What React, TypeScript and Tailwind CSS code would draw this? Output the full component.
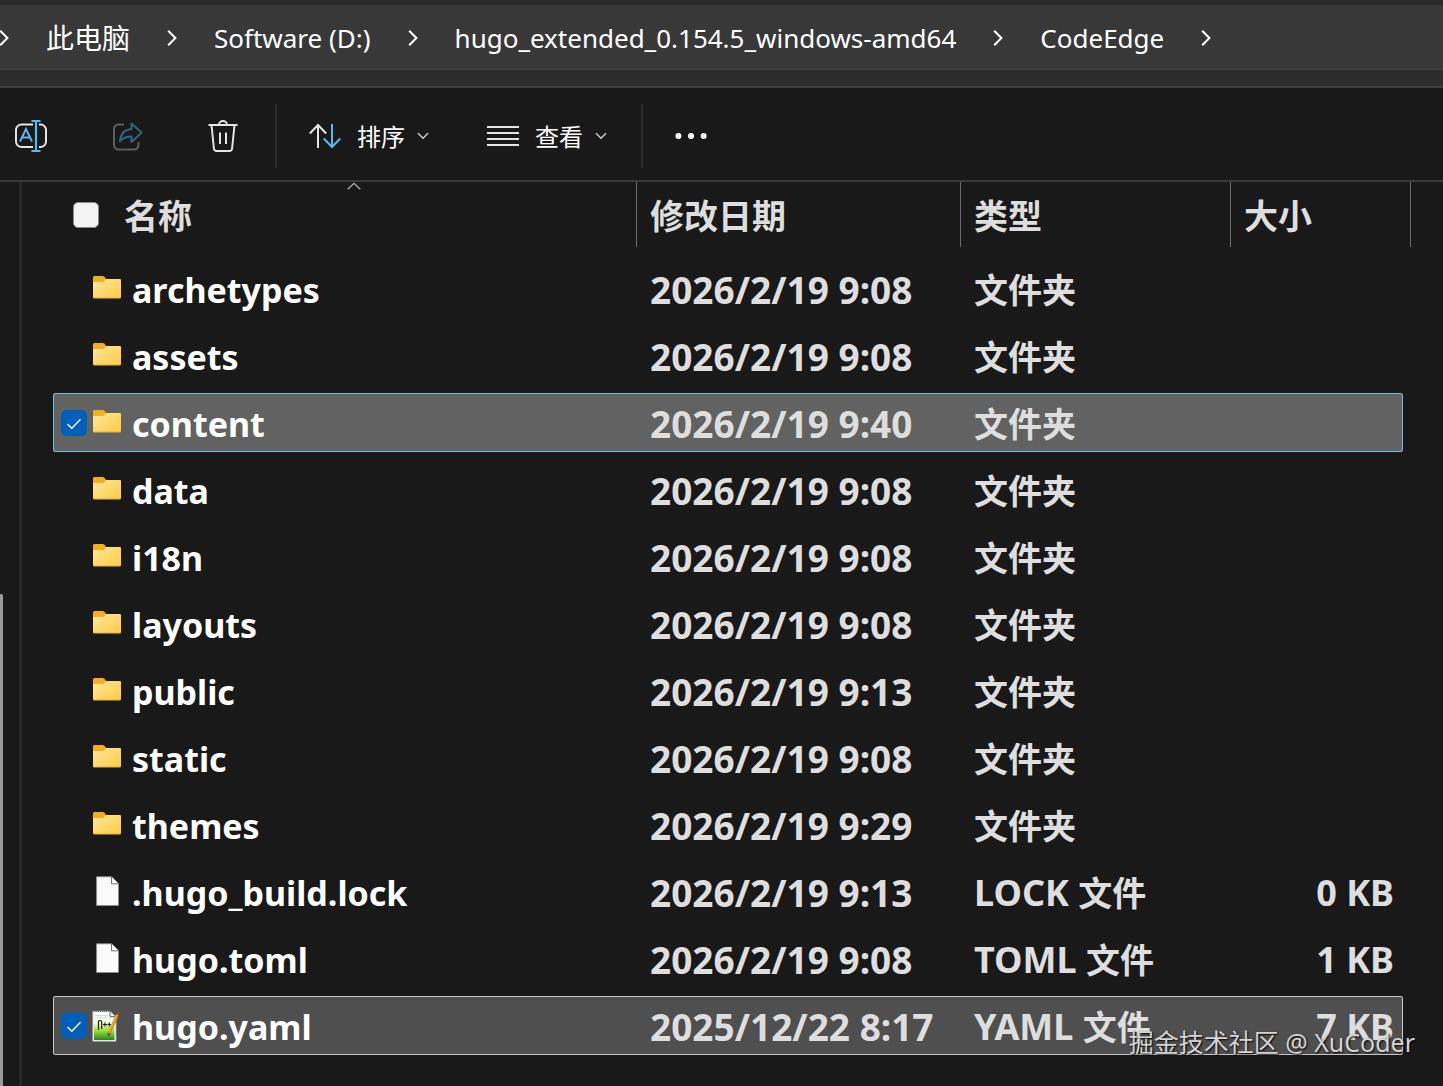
import { Fragment, useState } from "react";

type FileKind = "folder" | "file" | "notepad";

interface Entry {
  name: string;
  kind: FileKind;
  modified: string;
  ext?: string;
  label: string;
  size?: string;
}

const PATH = ["此电脑", "Software (D:)", "hugo_extended_0.154.5_windows-amd64", "CodeEdge"];

const ENTRIES: Entry[] = [
  { name: "archetypes", kind: "folder", modified: "2026/2/19 9:08", label: "文件夹" },
  { name: "assets", kind: "folder", modified: "2026/2/19 9:08", label: "文件夹" },
  { name: "content", kind: "folder", modified: "2026/2/19 9:40", label: "文件夹" },
  { name: "data", kind: "folder", modified: "2026/2/19 9:08", label: "文件夹" },
  { name: "i18n", kind: "folder", modified: "2026/2/19 9:08", label: "文件夹" },
  { name: "layouts", kind: "folder", modified: "2026/2/19 9:08", label: "文件夹" },
  { name: "public", kind: "folder", modified: "2026/2/19 9:13", label: "文件夹" },
  { name: "static", kind: "folder", modified: "2026/2/19 9:08", label: "文件夹" },
  { name: "themes", kind: "folder", modified: "2026/2/19 9:29", label: "文件夹" },
  { name: ".hugo_build.lock", kind: "file", modified: "2026/2/19 9:13", ext: "LOCK", label: "文件", size: "0 KB" },
  { name: "hugo.toml", kind: "file", modified: "2026/2/19 9:08", ext: "TOML", label: "文件", size: "1 KB" },
  { name: "hugo.yaml", kind: "notepad", modified: "2025/12/22 8:17", ext: "YAML", label: "文件", size: "7 KB" },
];

const ChevronRight = () => (
  <svg width="10" height="18" viewBox="0 0 10 18" fill="none" className="shrink-0" aria-hidden="true">
    <path d="M1.2 1.8 8.4 9l-7.2 7.2" stroke="#fff" strokeWidth="2" />
  </svg>
);

const ChevronDown = () => (
  <svg width="12" height="8" viewBox="0 0 12 8" fill="none" aria-hidden="true">
    <path d="m1 1.2 5 5 5-5" stroke="#c8c8c8" strokeWidth="1.6" />
  </svg>
);

const RenameIcon = () => (
  <svg width="32" height="32" viewBox="0 0 32 32" fill="none" strokeWidth="2" aria-hidden="true">
    <path d="M18 4.5H6.5A5.5 5.5 0 0 0 1 10v11.5A5.5 5.5 0 0 0 6.5 27H18M24 4.5h1.500A5.500 5.500 0 0 1 31 10v11.500a5.500 5.500 0 0 1-5.500 5.500H24" stroke="#e4e4e4" />
    <path d="M21 1v30M16.500 1h9M16.500 31h9" stroke="#5ab8ee" strokeWidth="2.200" />
    <path d="m5 21.500 6-12.500 6 12.500M7.200 17.500h7.600" stroke="#5ab8ee" />
  </svg>
);

const ShareIcon = () => (
  <svg width="32" height="32" viewBox="0 0 32 32" fill="none" strokeWidth="2" strokeLinejoin="round" aria-hidden="true">
    <path d="M13 4.500H7.500A4.500 4.500 0 0 0 3 9v16a4.500 4.500 0 0 0 4.500 4.500h15.500A4.500 4.500 0 0 0 27.500 25v-3" stroke="#5d5d5d" />
    <path d="M20.500 3.500 30.500 12.500l-10 9.500v-5.500c-5.500 0-9 1.500-11.500 5 .5-7.500 4.500-12 11.500-12.500z" stroke="#2f6480" />
  </svg>
);

const TrashIcon = () => (
  <svg width="32" height="32" viewBox="0 0 32 32" fill="none" stroke="#e4e4e4" strokeWidth="2" aria-hidden="true">
    <path d="M1.500 5h29M12 5a4 4 0 0 1 8 0M4.500 5l2.400 23.500A2.800 2.800 0 0 0 9.700 31h12.600a2.800 2.800 0 0 0 2.800-2.500L27.500 5M13 12.500v11.500M19 12.500v11.500" />
  </svg>
);

const SortIcon = () => (
  <svg width="32" height="32" viewBox="0 0 32 32" fill="none" strokeWidth="2" aria-hidden="true">
    <path d="M9 28V5M.8 13.500 9 5l8.200 8.500" stroke="#e4e4e4" />
    <path d="M23 4v23M14.800 18.500 23 27l8.200-8.500" stroke="#5ab8ee" />
  </svg>
);

const ViewIcon = () => (
  <svg width="32" height="32" viewBox="0 0 32 32" stroke="#e4e4e4" strokeWidth="2" aria-hidden="true">
    <path d="M0 7h32M0 13h32M0 19h32M0 25h32" />
  </svg>
);

const MoreIcon = () => (
  <svg width="32" height="32" viewBox="0 0 32 32" fill="#fff" aria-hidden="true">
    <circle cx="3.400" cy="16" r="3" />
    <circle cx="16" cy="16" r="3" />
    <circle cx="28.600" cy="16" r="3" />
  </svg>
);

const FileIcon: React.FC<{ kind: FileKind }> = ({ kind }) => {
  if (kind === "folder") {
    return (
      <svg width="30" height="32" viewBox="0 0 30 32" aria-hidden="true">
        <defs>
          <linearGradient id="folder-front" x1="0" y1="0" x2="1" y2="1">
            <stop offset="0" stopColor="#ffe7a0" />
            <stop offset="1" stopColor="#fdcb3f" />
          </linearGradient>
        </defs>
        <path d="M1 4.500A1.500 1.500 0 0 1 2.500 3h8a3 3 0 0 1 2.200 1L14 6v5H1z" fill="#f3b01c" />
        <path d="M1 9h9.500c1 0 1.500-.3 2-1L14 6h14a1 1 0 0 1 1 1v17a1.300 1.300 0 0 1-1.300 1.300H2.300A1.300 1.300 0 0 1 1 24z" fill="url(#folder-front)" />
        <path d="M1.500 25h27" stroke="#e0a526" strokeWidth=".7" />
      </svg>
    );
  }

  if (kind === "file") {
    return (
      <svg width="30" height="32" viewBox="0 0 30 32" aria-hidden="true">
        <path d="M4.500.8H19.500l7 7v21.700h-22z" fill="#fbfbfb" stroke="#8c8c8c" strokeWidth=".8" />
        <path d="M19.500.8v7h7" fill="#fff" stroke="#6f6f6f" strokeWidth="1" />
      </svg>
    );
  }

  return (
    <svg width="30" height="32" viewBox="0 0 30 32" fill="none" aria-hidden="true">
      <defs>
        <linearGradient id="notepad-page" x1="0" y1="0" x2="0" y2="1">
          <stop offset="0" stopColor="#fff" />
          <stop offset=".35" stopColor="#f4fbe6" />
          <stop offset=".65" stopColor="#a4dc38" />
          <stop offset="1" stopColor="#1d8a1d" />
        </linearGradient>
      </defs>
      <path d="M.8 1.200H18l6 6v24H.8z" fill="#fff" stroke="#aaa" strokeWidth=".8" />
      <path d="M2 3h15l5.500 5v22H2z" fill="url(#notepad-page)" />
      <path d="M2 1.500h16" stroke="#777" strokeDasharray="1 1" />
      <path d="M3 5.500h14M3 8h18" stroke="#cfd4cc" strokeWidth=".8" />
      <path d="M18 1.200v5.500h5.500" fill="#e9e9e9" stroke="#666" />
      <path d="M6.500 20v-9.500M6.500 11c2-1 3.200-.5 3.200 1.500V19M11 14.500h4M13 12.500v4M15.500 14.500h3.500M17.300 12.500v4" stroke="#222" strokeWidth="1.200" />
      <path d="m25.500 4.500-8.500 19" stroke="#d08a16" strokeWidth="3" />
      <path d="m25 4.500-8.500 19" stroke="#f0b43a" strokeWidth="1.200" />
      <path d="m27 1.500-1.500 3" stroke="#9c3b34" strokeWidth="3" />
      <path d="m15.500 22.500 3 1.500-2.500 2.500z" fill="#5b4630" />
    </svg>
  );
};

const FileExplorer: React.FC = () => {
  const [selected, setSelected] = useState<string[]>(["content", "hugo.yaml"]);
  const focused = "content";

  const toggle = (name: string) => {
    setSelected((prev) => (prev.includes(name) ? prev.filter((n) => n !== name) : [...prev, name]));
  };

  const rowTone = (name: string) => {
    if (!selected.includes(name)) return "border-transparent hover:bg-[#2d2d2d]";
    return name === focused ? "border-[#72bfdc] bg-[#626262]" : "border-[#c6c6c6] bg-[#4f4f4f]";
  };

  return (
    <div className="relative flex min-h-screen flex-col overflow-hidden bg-[#191919] font-['Noto_Sans','Noto_Sans_CJK_SC',sans-serif] text-white select-none">
      <header className="border-b-2 border-[#3f3f3f] bg-[#2c2c2c] pt-[5px] pb-4">
        <nav aria-label="路径" className="-ml-px flex h-[65px] items-center gap-[37px] border-b border-[#424242] bg-[#383838] pt-0.5 text-[26px] whitespace-nowrap">
          <ChevronRight />
          {PATH.map((part, i) => (
            <Fragment key={part}>
              <button type="button" className={i === 0 ? "text-[28px] leading-none" : "leading-none"}>
                {part}
              </button>
              <ChevronRight />
            </Fragment>
          ))}
        </nav>
      </header>

      <div role="toolbar" className="flex border-b-2 border-[#3a3a3a] pt-4 pb-3 pl-[15px] text-2xl">
        <div className="flex h-16 items-center gap-16 pr-9">
          <button type="button" aria-label="重命名">
            <RenameIcon />
          </button>
          <button type="button" aria-label="共享" disabled>
            <ShareIcon />
          </button>
          <button type="button" aria-label="删除">
            <TrashIcon />
          </button>
        </div>
        <div className="flex items-center gap-[58px] border-x-2 border-[#2d2d2d] pr-[34px] pl-8">
          <button type="button" className="flex items-center">
            <SortIcon />
            <span className="mr-3 ml-4 pt-0.5">排序</span>
            <ChevronDown />
          </button>
          <button type="button" className="flex items-center">
            <ViewIcon />
            <span className="mr-3 ml-4 pt-0.5">查看</span>
            <ChevronDown />
          </button>
        </div>
        <button type="button" aria-label="更多" className="pl-8">
          <MoreIcon />
        </button>
      </div>

      <div className="flex grow">
        <aside className="flex w-[22px] shrink-0 flex-col justify-end border-r-3 border-[#282828] pt-[412px]">
          <div className="w-[3px] grow rounded-tr-xs bg-[#9b9b9b]" />
        </aside>

        <main className="grow pr-8 pb-6 pl-[31px]">
          <table className="block text-left text-[36px] font-bold text-[#dedede]">
            <thead className="block pb-3 pl-[19px] text-[34px]">
              <tr className="grid h-[65px] grid-cols-[1fr_324px_270px_180px] leading-none whitespace-nowrap">
                <th scope="col" aria-sort="ascending" className="relative flex items-center gap-[25px] border-r border-[#6a6a6a] pl-px">
                  <input
                    type="checkbox"
                    aria-label="全选"
                    checked={selected.length === ENTRIES.length}
                    onChange={(e) => setSelected(e.target.checked ? ENTRIES.map((n) => n.name) : [])}
                    className="size-[26px] appearance-none rounded-[5px] border border-[#8a8a8a] bg-[#f3f3f3] checked:bg-[#005fb8]"
                  />
                  <span className="pt-[3px]">名称</span>
                  <svg width="14" height="8" viewBox="0 0 14 8" fill="none" className="absolute top-0 left-1/2 -translate-x-1/2" aria-hidden="true">
                    <path d="m.8 7.300 6.200-6 6.200 6" stroke="#b4b4b4" strokeWidth="1.200" />
                  </svg>
                </th>
                <th scope="col" className="flex items-center border-r border-[#6a6a6a] pt-[3px] pl-[13px]">修改日期</th>
                <th scope="col" className="flex items-center border-r border-[#6a6a6a] pt-[3px] pl-[13px]">类型</th>
                <th scope="col" className="flex items-center border-r border-[#6a6a6a] pt-[3px] pl-[13px]">大小</th>
              </tr>
            </thead>
            <tbody className="flex flex-col gap-2 pr-2">
              {ENTRIES.map((entry) => (
                <tr
                  key={entry.name}
                  onClick={() => toggle(entry.name)}
                  className={`group grid h-[59px] grid-cols-[1fr_324px_270px_171px] items-center rounded-xs border leading-none whitespace-nowrap ${rowTone(entry.name)}`}
                >
                  <td className="flex items-center pl-[7px] text-[34px] text-white">
                    <span className="relative mr-[5px] flex size-[26px]">
                      <input
                        type="checkbox"
                        aria-label={entry.name}
                        checked={selected.includes(entry.name)}
                        onChange={() => toggle(entry.name)}
                        onClick={(e) => e.stopPropagation()}
                        className="peer size-[26px] appearance-none rounded-[5px] border border-[#8a8a8a] opacity-0 group-hover:opacity-100 checked:border-[#005fb8] checked:bg-[#005fb8] checked:opacity-100"
                      />
                      <svg viewBox="0 0 26 26" fill="none" className="pointer-events-none absolute inset-0 hidden peer-checked:block" aria-hidden="true">
                        <path d="m6.500 14 4.300 4.200 8.700-9" stroke="#fff" strokeWidth="1.400" />
                      </svg>
                    </span>
                    <FileIcon kind={entry.kind} />
                    <span className="ml-2.5 pt-[3px]">{entry.name}</span>
                  </td>
                  <td className="pt-0.5 pl-[13px] text-[37px]">{entry.modified}</td>
                  <td className="pt-0.5 pl-[13px]">
                    {entry.ext && `${entry.ext} `}
                    <span className="text-[34px]">{entry.label}</span>
                  </td>
                  <td className="pt-0.5 pr-2 text-right">{entry.size}</td>
                </tr>
              ))}
            </tbody>
          </table>
        </main>
      </div>

      <p className="pointer-events-none absolute right-7 bottom-[26px] font-['Noto_Sans','Noto_Sans_CJK_SC',sans-serif] text-[25px] leading-9 text-[#d4d4d4] [text-shadow:1px_1px_2px_#000]">
        掘金技术社区 @ XuCoder
      </p>
    </div>
  );
};

export default FileExplorer;
